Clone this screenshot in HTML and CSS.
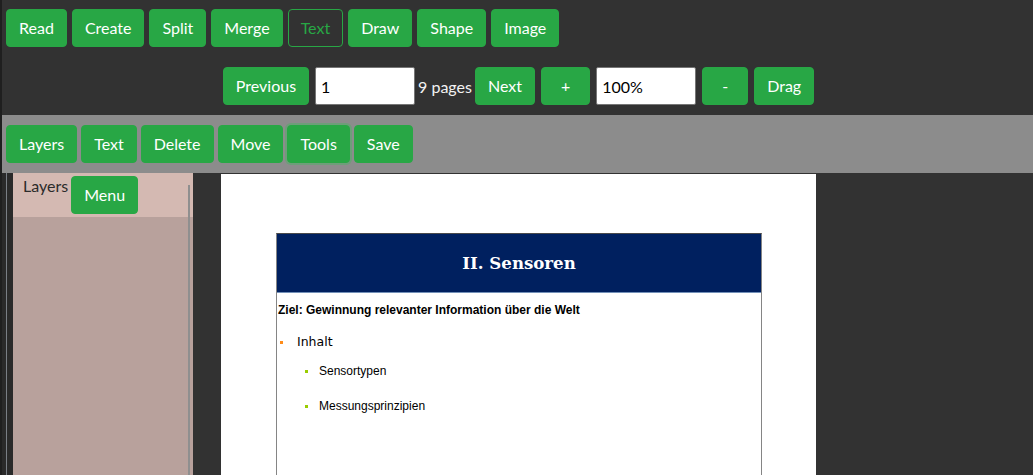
FILE: index.html
```html
<!DOCTYPE html>
<html>
<head>
<meta charset="utf-8">
<link rel="stylesheet" href="styles.css">
</head>
<body>
<div class="app">
  <div class="toolbar main-tools">
    <button class="btn">Read</button>
    <button class="btn">Create</button>
    <button class="btn">Split</button>
    <button class="btn">Merge</button>
    <button class="btn btn-outline">Text</button>
    <button class="btn">Draw</button>
    <button class="btn">Shape</button>
    <button class="btn">Image</button>
  </div>
  <div class="toolbar nav-tools">
    <button class="btn">Previous</button>
    <input class="field" type="text" value="1">
    <span class="pages">9 pages</span>
    <button class="btn">Next</button>
    <button class="btn btn-sq">+</button>
    <input class="field" type="text" value="100%">
    <button class="btn btn-sq">-</button>
    <button class="btn">Drag</button>
  </div>
  <div class="toolbar edit-tools">
    <button class="btn">Layers</button>
    <button class="btn">Text</button>
    <button class="btn">Delete</button>
    <button class="btn">Move</button>
    <button class="btn btn-focus">Tools</button>
    <button class="btn">Save</button>
  </div>
  <div class="workspace">
    <div class="gutter"><div class="gutter-line"></div></div>
    <aside class="panel">
      <div class="panel-head">
        <span class="panel-title">Layers</span>
        <button class="btn">Menu</button>
      </div>
      <div class="panel-body"></div>
      <div class="panel-track"></div>
    </aside>
    <div class="viewer">
      <div class="page">
        <div class="slide">
          <div class="slide-head">II. Sensoren</div>
          <div class="slide-body">
            <p class="goal">Ziel: Gewinnung relevanter Information über die Welt</p>
            <div class="item lvl1"><span class="bullet orange"></span><span>Inhalt</span></div>
            <div class="item lvl2"><span class="bullet green"></span><span>Sensortypen</span></div>
            <div class="item lvl2 last"><span class="bullet green"></span><span>Messungsprinzipien</span></div>
          </div>
        </div>
      </div>
    </div>
  </div>
</div>
</body>
</html>
```

FILE: styles.css
```css
html, body {
  margin: 0;
  padding: 0;
  background: #323232;
  overflow: hidden;
}
.app {
  width: 1033px;
  height: 475px;
  display: flex;
  flex-direction: column;
  font-family: Lato, "Open Sans", sans-serif;
  font-size: 16px;
  border-left: 2px solid #1f1f1f;
  box-sizing: border-box;
  overflow: hidden;
}
.toolbar {
  display: flex;
  align-items: center;
  flex-shrink: 0;
}
.main-tools {
  padding: 9px 0 0 4px;
  gap: 5px;
}
.nav-tools {
  margin-top: 20px;
  justify-content: center;
  gap: 6px;
  padding-left: 2px;
}
.edit-tools {
  margin-top: 10px;
  background: #8c8c8c;
  padding: 10px 0 10px 4px;
  gap: 4px;
}
.btn {
  font-family: inherit;
  font-size: 16px;
  line-height: 24px;
  color: #fff;
  background: #28a745;
  border: 1px solid #28a745;
  border-radius: 4px;
  padding: 6px 12px;
  margin: 0;
  cursor: pointer;
}
.btn-outline {
  background: transparent;
  color: #28a745;
}
.btn-sq {
  padding: 6px 19px;
}
.btn-focus {
  box-shadow: 0 0 0 2px rgba(72, 180, 97, 0.45);
}
.field {
  width: 100px;
  height: 38px;
  box-sizing: border-box;
  border: 1px solid #767676;
  border-radius: 2px;
  padding: 0 5px;
  font-family: inherit;
  font-size: 16px;
  color: #000;
  background: #fff;
  margin: 0;
}
.pages {
  color: #f2f2f2;
  margin: 0 -3px;
}
.workspace {
  flex: 1;
  display: flex;
  min-height: 0;
}
.gutter {
  width: 11px;
  display: flex;
  padding-left: 4px;
  box-sizing: border-box;
  background: #2a2a2a;
}
.gutter-line {
  width: 1px;
  background: #7a7f86;
  margin-right: 6px;
}
.panel {
  position: relative;
  width: 180px;
  display: flex;
  flex-direction: column;
  background: #b8a19c;
}
.panel-head {
  height: 44px;
  background: #d4b9b2;
  display: flex;
  align-items: flex-start;
  padding-left: 10px;
  box-sizing: border-box;
}
.panel-title {
  color: #2b2b2b;
  margin-top: 3px;
  margin-right: 3px;
}
.panel-head .btn {
  margin-top: 3px;
}
.panel-body {
  flex: 1;
}
.panel-track {
  position: absolute;
  right: 3px;
  top: 12px;
  bottom: 0;
  width: 2px;
  background: #8f8f8f;
}
.viewer {
  flex: 1;
  display: flex;
  padding-left: 28px;
  padding-top: 1px;
}
.page {
  width: 595px;
  background: #fff;
  padding: 59px 0 0 55px;
  box-sizing: border-box;
}
.slide {
  width: 486px;
  height: 300px;
  border: 1px solid #858585;
  box-sizing: border-box;
  border-top-color: #4a4a4a;
}
.slide-head {
  height: 59px;
  background: #00205f;
  border-bottom: 1px solid #7390b8;
  color: #fff;
  font-family: "DejaVu Serif", serif;
  font-weight: bold;
  font-size: 16.6px;
  display: flex;
  align-items: center;
  justify-content: center;
  box-sizing: border-box;
}
.slide-body {
  padding-left: 1px;
}
.goal {
  margin: 9px 0 0 0;
  font-family: "Liberation Sans", Arial, sans-serif;
  font-weight: bold;
  font-size: 12px;
  line-height: 16px;
  color: #000;
}
.item {
  display: flex;
  align-items: center;
  color: #000;
}
.lvl1 {
  margin-top: 16px;
  padding-left: 2px;
  font-family: "DejaVu Sans", Verdana, sans-serif;
  font-size: 12.5px;
  line-height: 16px;
}
.lvl1 .bullet {
  margin-right: 14px;
}
.lvl2 {
  margin-top: 13px;
  padding-left: 27px;
  font-family: "Liberation Sans", Arial, sans-serif;
  font-size: 12px;
  line-height: 16px;
}
.lvl2.last {
  margin-top: 19px;
}
.lvl2 .bullet {
  margin-right: 11px;
}
.bullet {
  width: 3px;
  height: 3px;
  flex-shrink: 0;
}
.orange {
  background: #ff8c1a;
}
.green {
  background: #99cc00;
}
```
